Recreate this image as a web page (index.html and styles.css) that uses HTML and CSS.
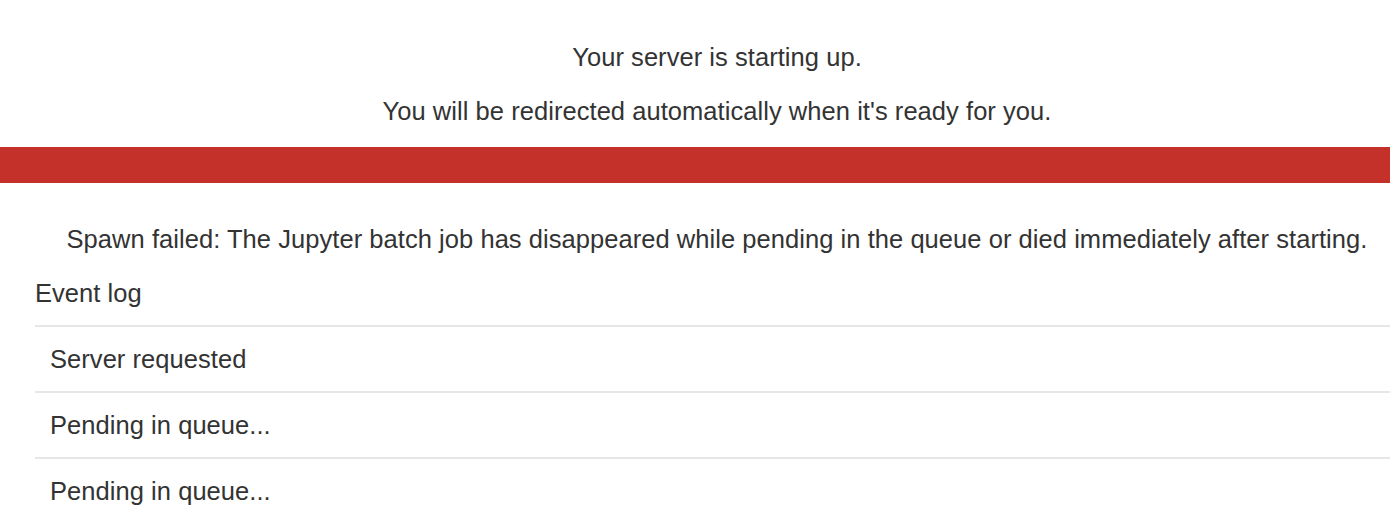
FILE: index.html
```html
<!DOCTYPE html>
<html>
<head>
<meta charset="utf-8">
<title>Server starting</title>
<link rel="stylesheet" href="styles.css">
</head>
<body>
<div class="page">
  <div class="status">
    <p>Your server is starting up.</p>
    <p>You will be redirected automatically when it's ready for you.</p>
    <div class="progress">
      <div class="progress-bar" role="progressbar"></div>
    </div>
    <p class="progress-message">Spawn failed: The Jupyter batch job has disappeared while pending in the queue or died immediately after starting.</p>
  </div>
  <div class="details">
    <div class="summary">Event log</div>
    <div class="events">
      <div class="event">Server requested</div>
      <div class="event">Pending in queue...</div>
      <div class="event">Pending in queue...</div>
    </div>
  </div>
</div>
</body>
</html>
```
FILE: styles.css
```css
html, body {
  margin: 0;
  padding: 0;
  background: #fff;
  overflow: hidden;
}
body {
  font-family: "Liberation Sans", Arial, Helvetica, sans-serif;
  font-size: 25.5px;
  letter-spacing: 0.05px;
  line-height: 36px;
  color: #333;
}
.page {
  width: 1434px;
  padding-top: 39px;
}
.status {
  text-align: center;
}
.status p {
  margin: 0 0 18px;
}
.progress {
  height: 36px;
  margin-bottom: 38px;
  background: #f5f5f5;
}
.progress-bar {
  height: 100%;
  width: 100%;
  background: #c4312b;
}
.details {
  padding-left: 35px;
}
.summary {
  margin-bottom: 14px;
}
.event {
  border-top: 2px solid #e6e6e6;
  padding: 14px 15px;
  height: 36px;
}
```
